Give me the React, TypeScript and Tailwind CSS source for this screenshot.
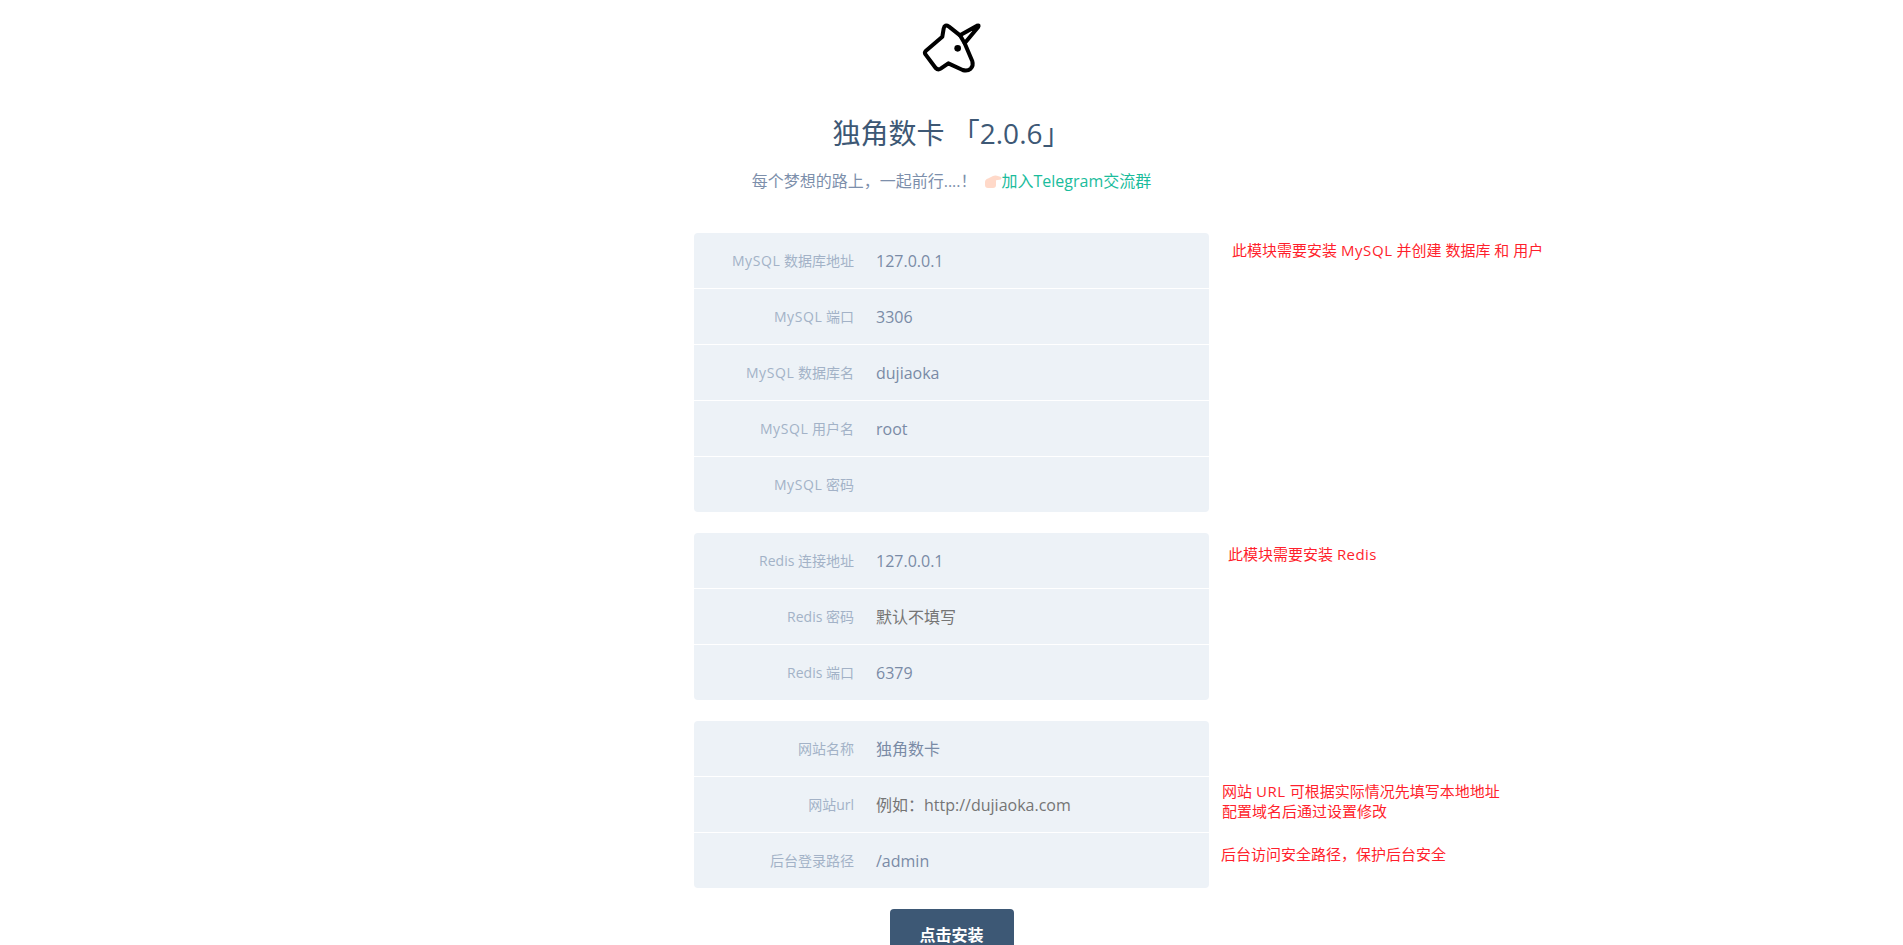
const font = '"Open Sans", "Noto Sans CJK SC", sans-serif';

type Row = { label: string; value: string; placeholder?: boolean; latin?: string };

const mysql: Row[] = [
  { latin: 'MySQL', label: ' 数据库地址', value: '127.0.0.1' },
  { latin: 'MySQL', label: ' 端口', value: '3306' },
  { latin: 'MySQL', label: ' 数据库名', value: 'dujiaoka' },
  { latin: 'MySQL', label: ' 用户名', value: 'root' },
  { latin: 'MySQL', label: ' 密码', value: '' },
];
const redis: Row[] = [
  { label: 'Redis 连接地址', value: '127.0.0.1' },
  { label: 'Redis 密码', value: '默认不填写', placeholder: true },
  { label: 'Redis 端口', value: '6379' },
];
const site: Row[] = [
  { label: '网站名称', value: '独角数卡' },
  { label: '网站url', value: '例如：http://dujiaoka.com', placeholder: true },
  { label: '后台登录路径', value: '/admin' },
];

function Panel({ rows }: { rows: Row[] }) {
  return (
    <div className="w-[515px] rounded-[4px] bg-[#edf2f7] overflow-hidden">
      {rows.map((r, i) => (
        <div key={r.label} className={`flex items-center h-[55px] ${i > 0 ? 'box-content border-t border-white' : ''}`}>
          <div className="w-[160px] text-right text-[14px] text-[#a3b2c7]">
            {r.latin && <span className="tracking-[0.6px]">{r.latin}</span>}
            {r.label}
          </div>
          <div className={`ml-[22px] text-[16px] ${r.placeholder ? 'text-[#757575]' : 'text-[#7a8ba6]'}`}>{r.value}</div>
        </div>
      ))}
    </div>
  );
}

function Logo() {
  return (
    <svg viewBox="0 0 429 270" className="w-[143px] h-[90px] block shrink-0" fill="none" stroke="#000" strokeWidth="12" strokeLinejoin="round" strokeLinecap="round">
      <path d="M240 106 L207 80 Q194 71 191 86 L187 110 L138 152 Q132 158 137 164 L167 204 Q174 211 182 206 L205 190 L248 210 Q262 215 272 206 Q281 197 277 184 L254 130 L294 82 Q299 74 291 77 Z" />
      <path d="M240 106 L254 130" />
      <circle cx="233" cy="145" r="10" fill="#000" stroke="none" />
    </svg>
  );
}

function Hand() {
  return (
    <svg viewBox="0 0 17 15" className="w-[17px] h-[15px] inline-block">
      <path fill="#ffd9c9" d="M0 8 Q0 5.5 3 4.5 L8 2 Q10 1 12 1.8 L16 3 Q17 4.5 16 5.5 L11 6.2 L11 11 Q11 14 8 14 L3 14 Q0 14 0 11 Z" />
    </svg>
  );
}

export default function App() {
  return (
    <div className="h-screen overflow-hidden bg-white" style={{ fontFamily: font }}>
      <div className="flex flex-col items-center">
        <Logo />
        <h1 className="mt-[20px] h-[46px] leading-[46px] text-[28px] font-normal text-[#3d5875]">独角数卡 「2.0.6」</h1>
        <p className="mt-[13px] h-[24px] leading-[24px] text-[16px] text-[#7d8fab] flex items-center">
          <span>每个梦想的路上，一起前行....！</span>
          <a className="ml-[8px] text-[#1abc9c] flex items-center"><Hand />加入Telegram交流群</a>
        </p>
        <div className="mt-[40px] relative">
          <Panel rows={mysql} />
          <p className="absolute left-[538px] top-[6px] whitespace-nowrap text-[15px] text-[#ff1f2d]">此模块需要安装 <span className="tracking-[0.6px]">MySQL</span> 并创建 数据库 和 用户</p>
        </div>
        <div className="mt-[21px] relative">
          <Panel rows={redis} />
          <p className="absolute left-[534px] top-[10px] whitespace-nowrap text-[15px] text-[#ff1f2d]">此模块需要安装 <span className="tracking-[0.4px]">Redis</span></p>
        </div>
        <div className="mt-[21px] relative">
          <Panel rows={site} />
          <p className="absolute left-[528px] top-[60px] whitespace-nowrap text-[15px] leading-[20px] text-[#ff1f2d]">网站 <span className="tracking-[0.6px]">URL</span> 可根据实际情况先填写本地地址<br />配置域名后通过设置修改</p>
          <p className="absolute left-[527px] top-[123px] whitespace-nowrap text-[15px] leading-[20px] text-[#ff1f2d]">后台访问安全路径，保护后台安全</p>
        </div>
        <button className="mt-[21px] w-[124px] h-[52px] shrink-0 rounded-[4px] bg-[#3d5875] text-white text-[16px] font-bold">点击安装</button>
      </div>
    </div>
  );
}
